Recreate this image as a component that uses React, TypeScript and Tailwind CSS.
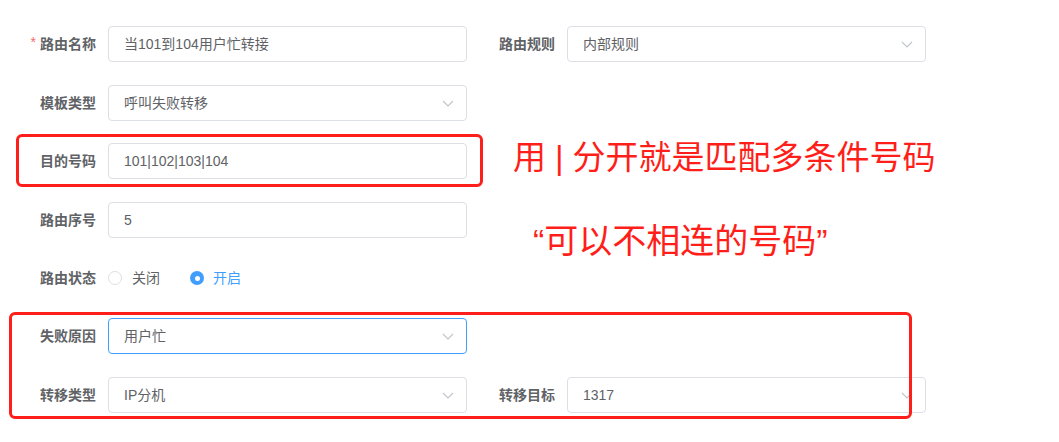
import React from "react";

const FONT = "font-['Liberation_Sans','Noto_Sans_CJK_SC',sans-serif]";

function Chevron() {
  return (
    <svg width="12" height="7" viewBox="0 0 12 7" className="shrink-0">
      <polyline points="1,1 6,6 11,1" fill="none" stroke="#c0c4cc" strokeWidth="1.1" />
    </svg>
  );
}

function Label({ text, required }: { text: string; required?: boolean }) {
  return (
    <div className="w-[100px] shrink-0 pr-3 text-right text-[14px] font-bold text-[#606266] leading-none">
      {required && <span className="mr-1 text-[#f56c6c] font-normal relative top-[-2px]">*</span>}
      {text}
    </div>
  );
}

function Field({
  value,
  select,
  focused,
}: {
  value: string;
  select?: boolean;
  focused?: boolean;
}) {
  return (
    <div
      className={
        "w-[359px] h-[36px] shrink-0 rounded-[4px] border bg-white flex items-center pl-[15px] pr-[12px] " +
        (focused ? "border-[#409eff]" : "border-[#dcdfe6]")
      }
    >
      <span className="flex-1 text-[14px] text-[#606266] leading-none">{value}</span>
      {select && <Chevron />}
    </div>
  );
}

function Item({
  label,
  value,
  select,
  focused,
  required,
}: {
  label: string;
  value: string;
  select?: boolean;
  focused?: boolean;
  required?: boolean;
}) {
  return (
    <div className="flex items-center w-[459px]">
      <Label text={label} required={required} />
      <Field value={value} select={select} focused={focused} />
    </div>
  );
}

export default function App() {
  return (
    <div className={"relative w-[1059px] h-[442px] bg-white overflow-hidden " + FONT}>
      <div className="pt-[26px] pl-[8px] flex flex-col">
        <div className="flex h-[36px] mb-[23px]">
          <Item label="路由名称" value="当101到104用户忙转接" required />
          <Item label="路由规则" value="内部规则" select />
        </div>
        <div className="flex h-[36px] mb-[22px]">
          <Item label="模板类型" value="呼叫失败转移" select />
        </div>
        <div className="flex h-[36px] mb-[23px]">
          <Item label="目的号码" value="101|102|103|104" />
        </div>
        <div className="flex h-[36px] mb-[22px]">
          <Item label="路由序号" value="5" />
        </div>
        <div className="flex h-[36px] mb-[22px] items-center">
          <Label text="路由状态" />
          <div className="flex items-center text-[14px] leading-none">
            <span className="w-[14px] h-[14px] rounded-full border border-[#dcdfe6] bg-white" />
            <span className="ml-[10px] text-[#606266]">关闭</span>
            <span className="ml-[30px] w-[14px] h-[14px] rounded-full bg-[#409eff] flex items-center justify-center">
              <span className="w-[5px] h-[5px] rounded-full bg-white" />
            </span>
            <span className="ml-[9px] text-[#409eff]">开启</span>
          </div>
        </div>
        <div className="flex h-[36px] mb-[23px]">
          <Item label="失败原因" value="用户忙" select focused />
        </div>
        <div className="flex h-[36px]">
          <Item label="转移类型" value="IP分机" select />
          <Item label="转移目标" value="1317" select />
        </div>
      </div>

      <div className="absolute left-[16px] top-[134px] w-[467px] h-[53px] rounded-[6px] border-[3px] border-[#ff1f1a]" />
      <div className="absolute left-[9px] top-[312px] w-[903px] h-[107px] rounded-[6px] border-[3px] border-[#ff1f1a]" />

      <div className="absolute left-[513px] top-[141px] text-[33px] leading-none text-[#ff1f1a] whitespace-nowrap flex items-baseline">
        <span>用</span>
        <span className="mx-[9px] font-['Liberation_Sans'] font-light text-[#ff1f1a]">|</span>
        <span>分开就是匹配多条件号码</span>
      </div>
      <div className="absolute left-[533px] top-[224px] text-[34px] leading-none text-[#ff1f1a] whitespace-nowrap flex items-baseline">
        <span className="font-['Liberation_Sans']">“</span>
        <span>可以不相连的号码</span>
        <span className="font-['Liberation_Sans']">”</span>
      </div>
    </div>
  );
}
